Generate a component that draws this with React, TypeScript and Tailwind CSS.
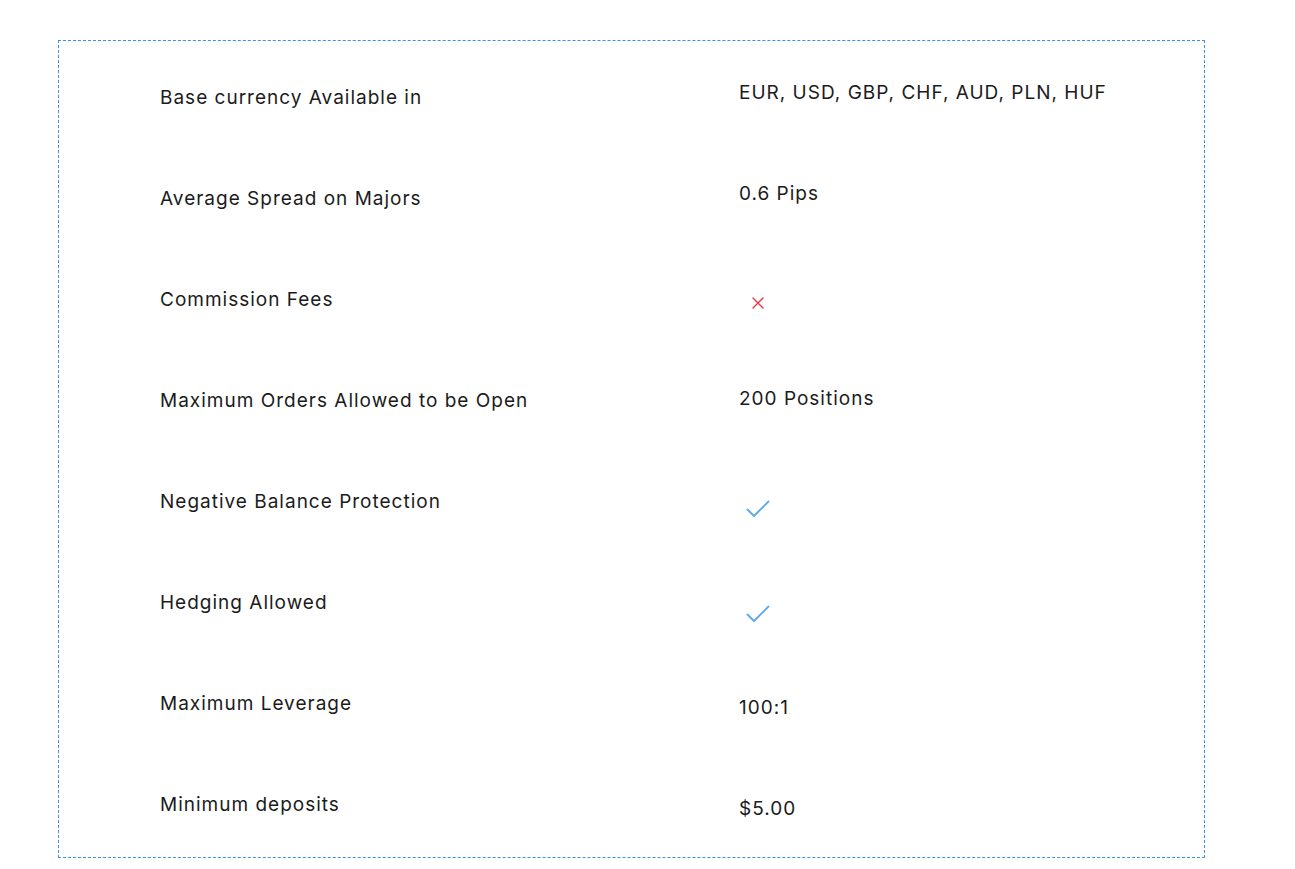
import React from "react";

const Check = () => (
  <svg width="24" height="18" viewBox="0 0 24 18" fill="none">
    <path d="M1.5 9.5 L8 16 L22.5 1.5" stroke="#5eaaf2" strokeWidth="1.9" strokeLinecap="round" strokeLinejoin="round" />
  </svg>
);

const Cross = () => (
  <svg width="12" height="12" viewBox="0 0 12 12" fill="none">
    <path d="M1 1 L11 11 M11 1 L1 11" stroke="#e8383d" strokeWidth="1.4" strokeLinecap="round" />
  </svg>
);

type Row = { label: string; value: React.ReactNode; off: string };

const rows: Row[] = [
  { label: "Base currency Available in", value: "EUR, USD, GBP, CHF, AUD, PLN, HUF", off: "-mt-[10px]" },
  { label: "Average Spread on Majors", value: "0.6 Pips", off: "-mt-[10px]" },
  { label: "Commission Fees", value: <Cross />, off: "mt-[4px] ml-[13px]" },
  { label: "Maximum Orders Allowed to be Open", value: "200 Positions", off: "-mt-[4px]" },
  { label: "Negative Balance Protection", value: <Check />, off: "mt-[12px] ml-[7px]" },
  { label: "Hedging Allowed", value: <Check />, off: "mt-[20px] ml-[7px]" },
  { label: "Maximum Leverage", value: "100:1", off: "mt-[8px]" },
  { label: "Minimum deposits", value: "$5.00", off: "mt-[8px]" },
];

export default function App() {
  return (
    <div className="min-h-[869px] w-full bg-white pt-[40px] pl-[58px]" style={{ fontFamily: "Inter, 'Open Sans', sans-serif" }}>
      <div className="w-[1147px] border border-dashed border-[#3d8fe8] pt-[7px] pb-[1px]">
        {rows.map((r) => (
          <div key={r.label} className="flex h-[101px] items-center text-[19px] tracking-[1px] text-[#1b1b1b]">
            <div className="w-[680px] pl-[101px]">{r.label}</div>
            <div className={`flex items-center ${r.off}`}>{r.value}</div>
          </div>
        ))}
      </div>
    </div>
  );
}
